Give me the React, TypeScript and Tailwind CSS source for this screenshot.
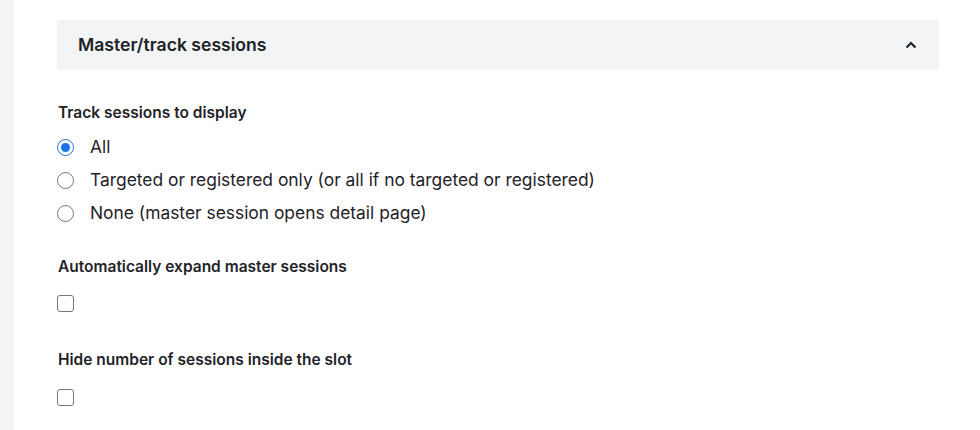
import React from "react";

const font = { fontFamily: "Inter, 'Liberation Sans', sans-serif" };

function Radio({ checked }: { checked?: boolean }) {
  return checked ? (
    <span className="w-[17px] h-[17px] rounded-full border-[1.5px] border-[#1a73e8] bg-white flex items-center justify-center shrink-0">
      <span className="w-[9px] h-[9px] rounded-full bg-[#1a73e8]" />
    </span>
  ) : (
    <span className="w-[17px] h-[17px] rounded-full border-[1.5px] border-[#767676] bg-white shrink-0" />
  );
}

function Checkbox() {
  return <span className="block w-[17px] h-[17px] rounded-[3px] border-[1.5px] border-[#767676] bg-white" />;
}

export default function App() {
  return (
    <div className="w-[980px] h-[430px] flex bg-white text-[#1f2328]" style={font}>
      <div className="w-[14px] bg-[#f3f4f6] shrink-0" />
      <div className="flex-1 pl-[43px] pr-[41px] pt-[20px]">
        <div className="h-[50px] bg-[#f3f4f6] flex items-center justify-between pl-[21px] pr-[22px]">
          <span className="text-[17.6px] font-semibold text-[#1d2327]">Master/track sessions</span>
          <svg width="12" height="8" viewBox="0 0 12 8" fill="none">
            <path d="M1.5 6.5 L6 2 L10.5 6.5" stroke="#1d2327" strokeWidth="2.2" />
          </svg>
        </div>
        <div className="mt-[32px] pl-px text-[15.5px] font-semibold leading-[22px]">Track sessions to display</div>
        <div className="mt-[7px] flex flex-col">
          <div className="h-[33px] flex items-center gap-[16px]">
            <Radio checked />
            <span className="text-[17.4px]">All</span>
          </div>
          <div className="h-[33px] flex items-center gap-[16px]">
            <Radio />
            <span className="text-[17.4px]">Targeted or registered only (or all if no targeted or registered)</span>
          </div>
          <div className="h-[33px] flex items-center gap-[16px]">
            <Radio />
            <span className="text-[17.4px]">None (master session opens detail page)</span>
          </div>
        </div>
        <div className="mt-[26px] pl-px text-[15.5px] font-semibold leading-[22px]">Automatically expand master sessions</div>
        <div className="mt-[17px]"><Checkbox /></div>
        <div className="mt-[37px] pl-px text-[15.5px] font-semibold leading-[22px]">Hide number of sessions inside the slot</div>
        <div className="mt-[18px]"><Checkbox /></div>
      </div>
    </div>
  );
}
